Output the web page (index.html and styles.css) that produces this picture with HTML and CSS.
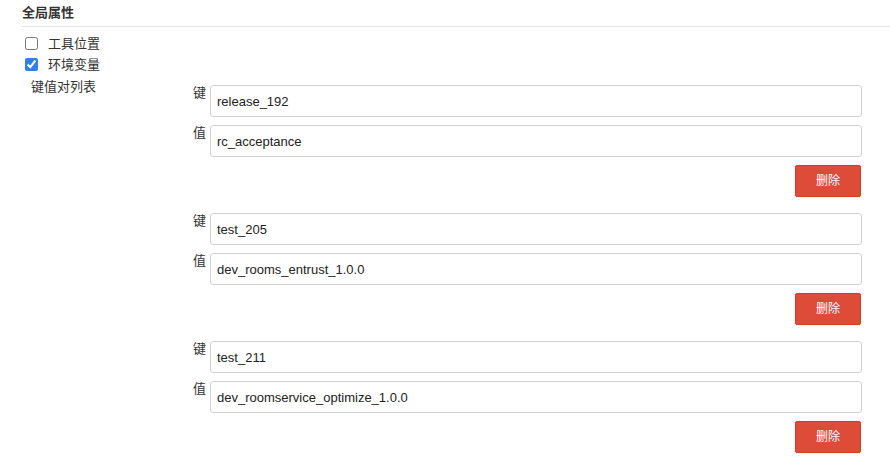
FILE: index.html
```html
<!DOCTYPE html>
<html lang="zh-CN">
<head>
<meta charset="utf-8">
<title>全局属性</title>
<link rel="stylesheet" href="styles.css">
</head>
<body>
<div class="page">
  <div class="section-title">全局属性</div>
  <div class="options">
    <label class="check-row"><input type="checkbox" class="check"><span>工具位置</span></label>
    <label class="check-row"><input type="checkbox" class="check" checked><span>环境变量</span></label>
  </div>
  <div class="kv">
    <div class="kv-title">键值对列表</div>
    <div class="kv-list">
      <div class="kv-group">
        <div class="field"><span class="field-label">键</span><input class="field-input" type="text" value="release_192"></div>
        <div class="field"><span class="field-label">值</span><input class="field-input" type="text" value="rc_acceptance"></div>
        <div class="actions"><button class="btn-danger" type="button">删除</button></div>
      </div>
      <div class="kv-group">
        <div class="field"><span class="field-label">键</span><input class="field-input" type="text" value="test_205"></div>
        <div class="field"><span class="field-label">值</span><input class="field-input" type="text" value="dev_rooms_entrust_1.0.0"></div>
        <div class="actions"><button class="btn-danger" type="button">删除</button></div>
      </div>
      <div class="kv-group">
        <div class="field"><span class="field-label">键</span><input class="field-input" type="text" value="test_211"></div>
        <div class="field"><span class="field-label">值</span><input class="field-input" type="text" value="dev_roomservice_optimize_1.0.0"></div>
        <div class="actions"><button class="btn-danger" type="button">删除</button></div>
      </div>
    </div>
  </div>
</div>
</body>
</html>
```

FILE: styles.css
```css
* { box-sizing: border-box; }
html, body { margin: 0; padding: 0; background: #fff; }
body {
  font-family: "Liberation Sans", "Noto Sans CJK SC", sans-serif;
  font-size: 13px;
  color: #333;
}
.page { width: 890px; height: 464px; overflow: hidden; }
.section-title {
  margin-left: 22px;
  padding: 4px 0 4px;
  line-height: 18px;
  font-weight: bold;
  color: #333;
  border-bottom: 1px solid #e4e4e4;
}
.options { padding-top: 6px; }
.check-row {
  display: flex;
  align-items: center;
  height: 21px;
  line-height: 21px;
}
.check {
  width: 13px;
  height: 13px;
  margin: 0 10px 0 25px;
  accent-color: #2f7ff5;
}
.kv { display: flex; align-items: flex-start; }
.kv-title {
  width: 190px;
  padding-left: 31px;
  line-height: 20px;
  padding-top: 2px;
}
.kv-list { flex: 1; padding-top: 10px; padding-right: 28px; }
.kv-group { margin-bottom: 16px; }
.field { display: flex; align-items: flex-start; margin-bottom: 8px; }
.field-label {
  width: 20px;
  padding-left: 3px;
  line-height: 16px;
  color: #333;
}
.field-input {
  flex: 1;
  height: 32px;
  padding: 6px;
  border: 1px solid #d2d2d2;
  border-radius: 3px;
  font-family: "Liberation Sans", "Noto Sans CJK SC", sans-serif;
  font-size: 13px;
  color: #222;
  background: #fff;
  outline: none;
}
.actions { display: flex; justify-content: flex-end; padding-right: 1px; }
.btn-danger {
  width: 66px;
  height: 32px;
  padding: 0;
  background: #dd4b39;
  border: 1px solid #d73925;
  border-radius: 2px;
  color: #fff;
  font-family: "Liberation Sans", "Noto Sans CJK SC", sans-serif;
  font-size: 12px;
  line-height: 30px;
}
```
